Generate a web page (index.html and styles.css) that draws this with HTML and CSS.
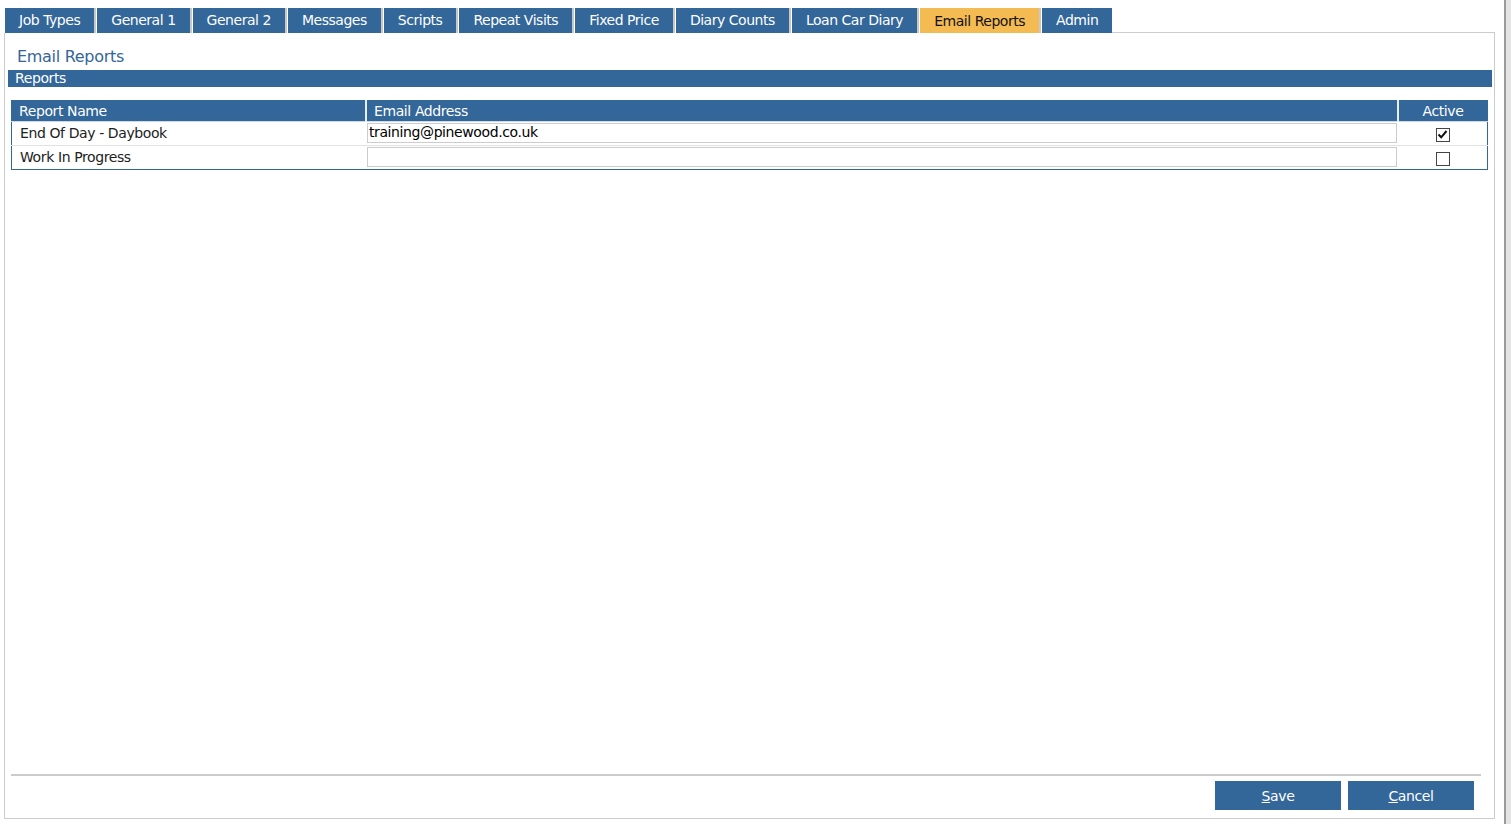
FILE: index.html
```html
<!DOCTYPE html>
<html lang="en">
<head>
    <meta charset="UTF-8">
    <title>Email Reports</title>
    <link rel="stylesheet" href="styles.css">
</head>
<body>
    <div class="page">
        <!-- Tabs -->
        <div class="tabs">
            <div class="tab">Job Types</div>
            <div class="tab">General 1</div>
            <div class="tab">General 2</div>
            <div class="tab">Messages</div>
            <div class="tab">Scripts</div>
            <div class="tab">Repeat Visits</div>
            <div class="tab">Fixed Price</div>
            <div class="tab">Diary Counts</div>
            <div class="tab">Loan Car Diary</div>
            <div class="tab active">Email Reports</div>
            <div class="tab">Admin</div>
            <div class="tab-fill"></div>
        </div>

        <!-- Panel -->
        <div class="panel">
            <div class="panel-body">
                <div class="title">Email Reports</div>
                <div class="section-bar">Reports</div>
                <table class="grid">
                    <thead>
                        <tr>
                            <th class="col-name">Report Name</th>
                            <th class="col-email">Email Address</th>
                            <th class="col-active">Active</th>
                        </tr>
                    </thead>
                    <tbody>
                        <tr>
                            <td>End Of Day - Daybook</td>
                            <td class="cell-input"><div class="field">training@pinewood.co.uk</div></td>
                            <td class="cell-check"><span class="check on">
                                <svg width="11" height="11" viewBox="0 0 11 11"><path d="M1.5 5.5 L4.2 8.3 L9.5 2" fill="none" stroke="#111" stroke-width="2"/></svg>
                            </span></td>
                        </tr>
                        <tr>
                            <td>Work In Progress</td>
                            <td class="cell-input"><div class="field"></div></td>
                            <td class="cell-check"><span class="check"></span></td>
                        </tr>
                    </tbody>
                </table>
            </div>
            <div class="panel-foot">
                <button class="btn"><u>S</u>ave</button>
                <button class="btn"><u>C</u>ancel</button>
            </div>
        </div>
    </div>
    <div class="side-strip"></div>
</body>
</html>
```

FILE: styles.css
```css
html, body {
    margin: 0;
    padding: 0;
    height: 100%;
    background-color: #ffffff;
    font-family: "DejaVu Sans", Tahoma, sans-serif;
    overflow: hidden;
}
body {
    display: flex;
}
.page {
    flex: 1;
    display: flex;
    flex-direction: column;
    padding: 8px 0 5px 4px;
    height: 824px;
    box-sizing: border-box;
}
.tabs {
    display: flex;
    height: 25px;
    padding-left: 1px;
    width: 1491px;
    box-sizing: border-box;
}
.tab {
    background-color: #336699;
    color: #ffffff;
    font-size: 14px;
    letter-spacing: -0.47px;
    line-height: 25px;
    padding: 0 14px;
    border-right: 2px solid #c8c8c8;
    margin-right: 1px;
    white-space: nowrap;
}
.tab.active {
    background-color: #f5bb53;
    color: #111111;
    line-height: 27px;
}
.tab:nth-last-child(2) {
    border-right: none;
}
.tab-fill {
    flex: 1;
    border-bottom: 1px solid #cccccc;
    margin-left: -1px;
}
.panel {
    flex: 1;
    width: 1491px;
    box-sizing: border-box;
    border: 1px solid #cccccc;
    border-top: none;
    display: flex;
    flex-direction: column;
}
.panel-body {
    flex: 1;
    padding: 0 2px 0 3px;
}
.title {
    color: #336699;
    font-size: 16px;
    letter-spacing: -0.3px;
    padding: 14px 0 0 9px;
    height: 23px;
}
.section-bar {
    background-color: #336699;
    color: #ffffff;
    font-size: 14px;
    letter-spacing: -0.4px;
    height: 17px;
    line-height: 17px;
    padding-left: 7px;
    margin-bottom: 13px;
}
.grid {
    width: 1477px;
    margin-left: 3px;
    border-collapse: collapse;
    border: 1px solid #336699;
    font-size: 14px;
    letter-spacing: -0.4px;
}
.grid th {
    background-color: #336699;
    color: #ffffff;
    font-weight: normal;
    text-align: left;
    height: 20px;
    padding: 0 0 0 7px;
    border-left: 2px solid #e8eef5;
    border-bottom: 1px solid #cfd9e6;
}
.grid th:first-child {
    border-left: none;
}
.grid th.col-name { width: 346px; }
.grid th.col-active {
    width: 88px;
    text-align: center;
    padding: 0;
}
.grid td {
    height: 24px;
    padding: 0 0 1px 8px;
    color: #222222;
    border-bottom: 1px solid #e2e2e2;
    box-sizing: border-box;
}
.grid tr:last-child td {
    border-bottom: none;
}
.grid td.cell-input {
    padding: 0 1px 1px;
}
.field {
    height: 18px;
    border: 1px solid #cccccc;
    line-height: 17px;
    padding-left: 1px;
    color: #000000;
}
.grid td.cell-check {
    padding: 0;
    text-align: center;
}
.check {
    display: inline-flex;
    align-items: center;
    justify-content: center;
    width: 14px;
    height: 14px;
    border: 1px solid #444444;
    box-sizing: border-box;
    vertical-align: middle;
    background: #ffffff;
}
.check svg {
    display: block;
}
.panel-foot {
    margin: 0 13px 0 6px;
    border-top: 2px solid #cccccc;
    display: flex;
    justify-content: flex-end;
    gap: 7px;
    padding: 5px 7px 8px 0;
}
.btn {
    width: 126px;
    height: 29px;
    background-color: #336699;
    color: #ffffff;
    border: none;
    font-family: "DejaVu Sans", Tahoma, sans-serif;
    font-size: 14px;
    letter-spacing: -0.4px;
    padding: 0;
}
.side-strip {
    width: 7px;
    margin-left: 9px;
    border-left: 2px solid #9a9a9a;
    background-color: #e4e4e4;
}
```
